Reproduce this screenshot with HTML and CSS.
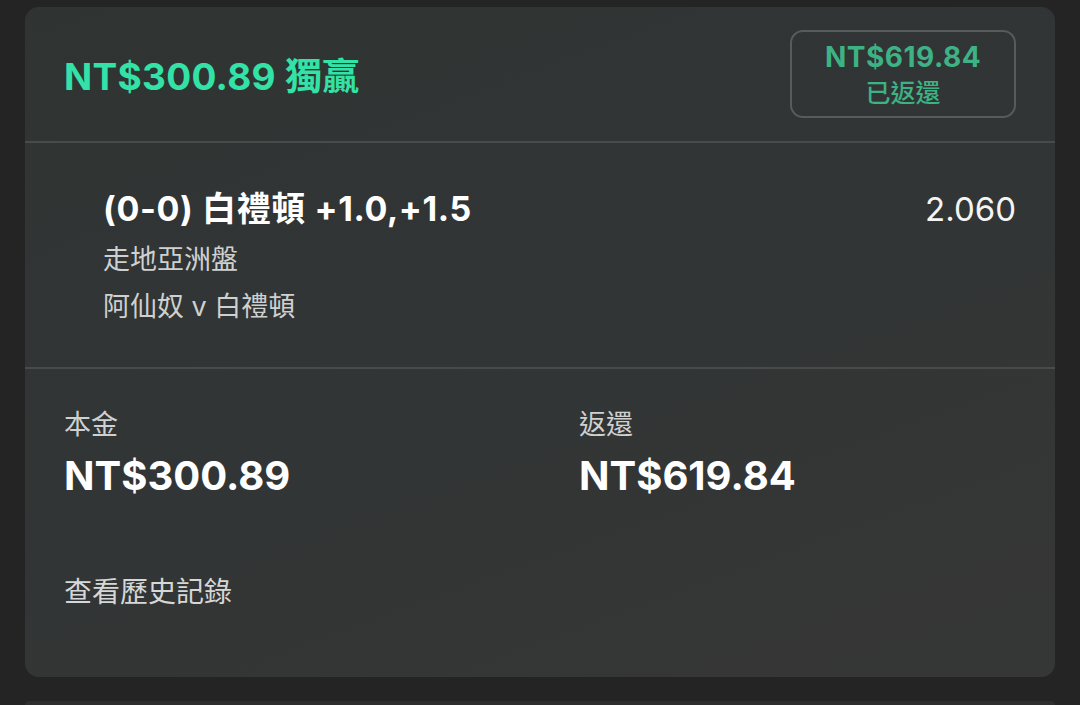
FILE: index.html
```html
<!DOCTYPE html>
<html lang="zh-Hant">
<head>
<meta charset="utf-8">
<link rel="stylesheet" href="styles.css">
</head>
<body>
  <div class="card">
    <div class="card-header">
      <div class="title">NT$300.89 獨贏</div>
      <div class="badge">
        <div class="badge-amount">NT$619.84</div>
        <div class="badge-label">已返還</div>
      </div>
    </div>
    <div class="selection">
      <div class="sel-info">
        <div class="sel-name">(0-0) 白禮頓 +1.0,+1.5</div>
        <div class="sel-market">走地亞洲盤</div>
        <div class="sel-event">阿仙奴 v 白禮頓</div>
      </div>
      <div class="odds">2.060</div>
    </div>
    <div class="summary">
      <div class="stats">
        <div class="stat">
          <div class="stat-label">本金</div>
          <div class="stat-value">NT$300.89</div>
        </div>
        <div class="stat">
          <div class="stat-label">返還</div>
          <div class="stat-value">NT$619.84</div>
        </div>
      </div>
      <div class="history">查看歷史記錄</div>
    </div>
  </div>
  <div class="card next-card"></div>
</body>
</html>
```

FILE: styles.css
```css
* { box-sizing: border-box; }

html, body {
  margin: 0;
  padding: 0;
}

body {
  background: #242424;
  padding-top: 7px;
  font-family: "Inter", "Liberation Sans", "Noto Sans CJK TC", sans-serif;
  color: #ffffff;
  height: 705px;
  overflow: hidden;
}

.card {
  width: 1030px;
  height: 670px;
  margin: 0 0 0 25px;
  border-radius: 14px;
  background: linear-gradient(160deg, #2f3433 0%, #323535 50%, #363636 100%);
  display: flex;
  flex-direction: column;
}

.next-card {
  margin-top: 24px;
  height: 4px;
  border-radius: 14px 14px 0 0;
  background: #2e2e2e;
}

.card-header {
  height: 136px;
  padding: 0 39px;
  display: flex;
  align-items: center;
  justify-content: space-between;
  border-bottom: 2px solid #474c4b;
  flex: none;
}

.title {
  font-size: 37px;
  font-weight: 700;
  color: #33e2a6;
  letter-spacing: 0.3px;
}

.badge {
  width: 226px;
  height: 88px;
  border: 2px solid #575b5a;
  border-radius: 13px;
  display: flex;
  flex-direction: column;
  align-items: center;
  justify-content: center;
  padding-top: 2px;
}

.badge-amount {
  font-size: 28px;
  line-height: 36px;
  font-weight: 700;
  color: #3db284;
  letter-spacing: 0.5px;
}

.badge-label {
  font-size: 25px;
  line-height: 36px;
  font-weight: 500;
  color: #3db284;
}

.selection {
  height: 226px;
  padding: 42px 39px 0 78px;
  display: flex;
  justify-content: space-between;
  border-bottom: 2px solid #474c4b;
  flex: none;
}

.sel-name {
  font-size: 34px;
  line-height: 48px;
  font-weight: 700;
  color: #ffffff;
  letter-spacing: 0.6px;
}

.sel-market,
.sel-event {
  font-size: 27px;
  line-height: 47px;
  color: #cfd0d0;
}

.sel-market {
  margin-top: 3px;
}

.odds {
  font-size: 33px;
  line-height: 48px;
  color: #f4f4f4;
}

.summary {
  padding: 36px 39px 0 39px;
}

.stats {
  display: grid;
  grid-template-columns: 515px 1fr;
}

.stat {
  display: flex;
  flex-direction: column;
  gap: 5px;
}

.stat-label {
  font-size: 27px;
  line-height: 40px;
  color: #cfd0d0;
}

.stat-value {
  font-size: 40px;
  line-height: 52px;
  font-weight: 700;
  color: #ffffff;
}

.history {
  margin-top: 70px;
  font-size: 28px;
  line-height: 40px;
  color: #d6d7d7;
}
```
